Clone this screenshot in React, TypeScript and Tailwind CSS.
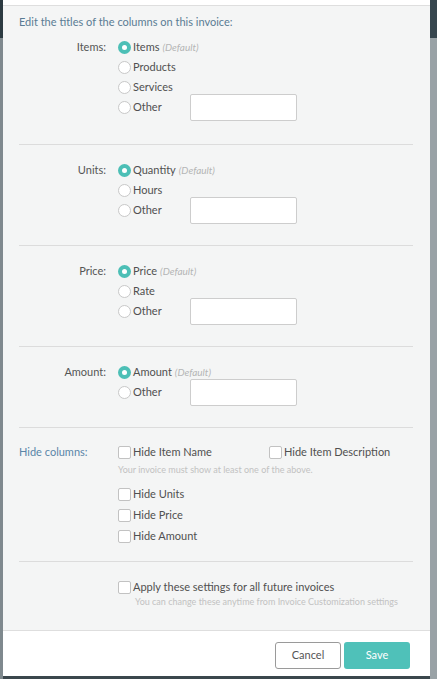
import React from 'react';

const font = { fontFamily: 'Lato, "Open Sans", sans-serif' };

const Radio = ({ checked, label, hint }: { checked?: boolean; label: string; hint?: boolean }) => (
    <div className="flex items-center h-5">
        {checked ? (
            <span className="w-[13px] h-[13px] rounded-full bg-[#4cbfb6] flex items-center justify-center">
                <span className="w-[5px] h-[5px] rounded-full bg-white" />
            </span>
        ) : (
            <span className="w-[13px] h-[13px] rounded-full bg-white border border-[#c8c8c8]" />
        )}
        <span className="ml-[2px] text-[11px] text-[#505050]">{label}</span>
        {hint && <span className="ml-[3px] text-[10px] italic text-[#b5b5b5]">(Default)</span>}
    </div>
);

const OtherRow = () => (
    <div className="flex items-center h-5">
        <span className="w-[13px] h-[13px] rounded-full bg-white border border-[#c8c8c8]" />
        <span className="ml-[2px] w-[57px] text-[11px] text-[#505050]">Other</span>
        <div className="w-[107px] h-[27px] bg-white border border-[#cdcdcd] rounded-[2px] shrink-0" />
    </div>
);

const Check = ({ label }: { label: string }) => (
    <div className="flex items-center">
        <span className="w-[13px] h-[13px] bg-white border border-[#c2c2c2] rounded-[2px] shrink-0" />
        <span className="ml-[2px] text-[11px] text-[#505050]">{label}</span>
    </div>
);

const Section = ({ title, children }: { title: string; children: React.ReactNode }) => (
    <div className="flex pt-[15px] pb-[25px] border-b border-[#dcdcdc]">
        <div className="w-[87px] h-5 flex items-center justify-end text-[11px] text-[#555]">{title}</div>
        <div className="ml-[12px] flex flex-col">{children}</div>
    </div>
);

export default function App() {
    return (
        <div className="w-[437px] h-[679px] flex bg-[#3b474d] overflow-hidden" style={font}>
            <div className="w-[3px] flex flex-col">
                <div className="h-[38px] bg-[#2c3a41]" />
                <div className="flex-1 bg-[#7f898e]" />
            </div>
            <div className="w-[427px] h-[676px] flex flex-col bg-[#f4f5f5]">
                <div className="h-[6px] bg-white border-b border-[#dedede]" />
                <div className="flex-1 px-4 pr-[17px]">
                    <div className="pt-[6px] h-[31px] leading-5 text-[11px] text-[#5a7c94]">
                        Edit the titles of the columns on this invoice:
                    </div>
                    <div className="flex pb-[27px] border-b border-[#dcdcdc]">
                        <div className="w-[87px] h-5 flex items-center justify-end text-[11px] text-[#555]">Items:</div>
                        <div className="ml-[12px] flex flex-col">
                            <Radio checked label="Items" hint />
                            <Radio label="Products" />
                            <Radio label="Services" />
                            <OtherRow />
                        </div>
                    </div>
                    <Section title="Units:">
                        <Radio checked label="Quantity" hint />
                        <Radio label="Hours" />
                        <OtherRow />
                    </Section>
                    <Section title="Price:">
                        <Radio checked label="Price" hint />
                        <Radio label="Rate" />
                        <OtherRow />
                    </Section>
                    <Section title="Amount:">
                        <Radio checked label="Amount" hint />
                        <OtherRow />
                    </Section>
                    <div className="flex pt-[14px] pb-[14px] border-b border-[#dcdcdc]">
                        <div className="w-[99px] h-5 flex items-center text-[11px] text-[#5a86a8]">Hide columns:</div>
                        <div className="flex flex-col">
                            <div className="flex items-center h-5">
                                <div className="w-[151px]"><Check label="Hide Item Name" /></div>
                                <Check label="Hide Item Description" />
                            </div>
                            <div className="h-[16px] flex items-center text-[9px] text-[#c2c2c2]">
                                Your invoice must show at least one of the above.
                            </div>
                            <div className="mt-[6px] h-[21px] flex items-center"><Check label="Hide Units" /></div>
                            <div className="h-[21px] flex items-center"><Check label="Hide Price" /></div>
                            <div className="h-[21px] flex items-center"><Check label="Hide Amount" /></div>
                        </div>
                    </div>
                    <div className="pl-[99px] pt-[15px]">
                        <div className="h-5 flex items-center"><Check label="Apply these settings for all future invoices" /></div>
                        <div className="pl-[17px] h-[10px] flex items-center text-[9px] text-[#c2c2c2]">
                            You can change these anytime from Invoice Customization settings
                        </div>
                    </div>
                </div>
                <div className="h-[46px] bg-white border-t border-[#dedede] flex items-start justify-end pt-[11px] pr-[20px] gap-[3px]">
                    <button className="w-[66px] h-[27px] bg-white border border-[#9a9a9a] rounded-[3px] text-[11px] text-[#555]">
                        Cancel
                    </button>
                    <button className="w-[66px] h-[27px] bg-[#4fc1b9] rounded-[3px] text-[11px] text-white">
                        Save
                    </button>
                </div>
            </div>
            <div className="w-[7px] flex flex-col">
                <div className="h-[38px] bg-[#37464e]" />
                <div className="flex-1 bg-[#99a2a6]" />
            </div>
        </div>
    );
}
